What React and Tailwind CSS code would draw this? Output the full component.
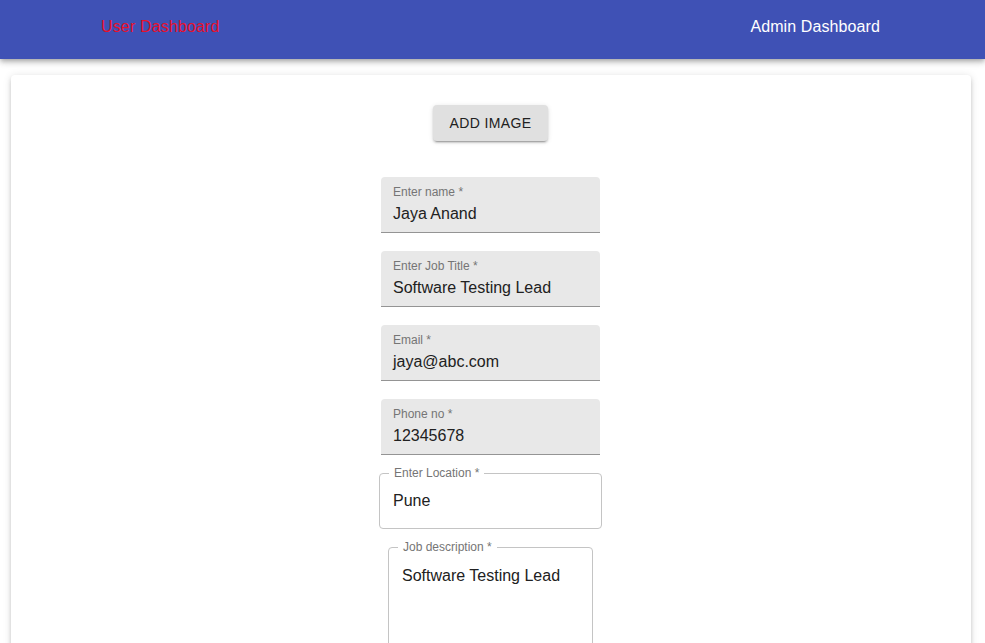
import React from "react";

function FilledField({ label, value }) {
  return (
    <div className="w-[219px] h-[56px] bg-[#e8e8e8] rounded-t-[4px] border-b border-[#949494] px-[12px] pt-[7px] box-border">
      <div className="text-[12px] leading-[17px] text-[#757575]">
        {label}
        <span> *</span>
      </div>
      <div className="mt-[1px] text-[16px] leading-[23px] text-[#212121]">{value}</div>
    </div>
  );
}

function OutlinedField({ label, value, className, labelLeft = "ml-[9px]" }) {
  return (
    <div className={"relative border border-[#c4c4c4] rounded-[4px] box-border " + className}>
      <span className={"absolute -top-[9px] left-0 bg-white px-[5px] text-[12px] leading-[17px] text-[#757575] " + labelLeft}>
        {label} *
      </span>
      <div className="px-[13px] text-[16px] leading-[23px] text-[#212121]">{value}</div>
    </div>
  );
}

export default function App() {
  return (
    <div className="min-h-[643px] bg-white overflow-hidden" style={{ fontFamily: '"Liberation Sans", Arial, sans-serif' }}>
      <header className="h-[59px] bg-[#3f51b5] flex items-start pt-[18px] pl-[101px] pr-[105px] shadow-[0_2px_4px_-1px_rgba(0,0,0,0.2),0_4px_5px_0_rgba(0,0,0,0.14),0_1px_10px_0_rgba(0,0,0,0.12)] relative z-10">
        <span className="text-[16px] leading-[18px] text-[#e8102a] tracking-[0.15px]">User Dashboard</span>
        <span className="ml-auto text-[16px] leading-[18px] text-white tracking-[0.1px]">Admin Dashboard</span>
      </header>
      <main className="ml-[11px] mr-[14px] mt-[16px] h-[600px] bg-white rounded-[4px] shadow-[0_3px_3px_-2px_rgba(0,0,0,0.2),0_3px_4px_0_rgba(0,0,0,0.14),0_1px_8px_0_rgba(0,0,0,0.12)] flex flex-col items-center pt-[30px] pr-[1px]">
        <button className="h-[36px] px-[16px] bg-[#e0e0e0] rounded-[4px] text-[14px] tracking-[0.4px] text-[#212121] uppercase shadow-[0_3px_1px_-2px_rgba(0,0,0,0.2),0_2px_2px_0_rgba(0,0,0,0.14),0_1px_5px_0_rgba(0,0,0,0.12)]">
          Add Image
        </button>
        <div className="mt-[36px] flex flex-col items-center gap-[18px]">
          <FilledField label="Enter name" value="Jaya Anand" />
          <FilledField label="Enter Job Title" value="Software Testing Lead" />
          <FilledField label="Email" value="jaya@abc.com" />
          <FilledField label="Phone no" value="12345678" />
        </div>
        <OutlinedField
          className="mt-[18px] w-[223px] h-[56px] pt-[15px]"
          label="Enter Location"
          value="Pune"
        />
        <OutlinedField
          className="mt-[18px] w-[205px] h-[120px] pt-[16px]"
          label="Job description"
          value="Software Testing Lead"
        />
      </main>
    </div>
  );
}
